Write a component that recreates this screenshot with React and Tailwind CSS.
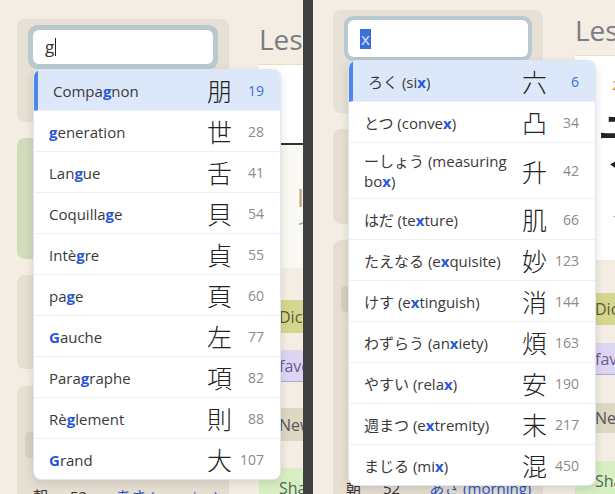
import React from "react";

const FONT = { fontFamily: '"Open Sans", "Noto Sans CJK JP", sans-serif' };
const CJK = { fontFamily: '"Noto Sans CJK JP", sans-serif' };

const leftItems = [
  ["Compagnon", "朋", 19],
  ["generation", "世", 28],
  ["Langue", "舌", 41],
  ["Coquillage", "貝", 54],
  ["Intègre", "貞", 55],
  ["page", "頁", 60],
  ["Gauche", "左", 77],
  ["Paragraphe", "項", 82],
  ["Règlement", "則", 88],
  ["Grand", "大", 107],
];

const rightItems = [
  ["ろく (six)", "六", 6],
  ["とつ (convex)", "凸", 34],
  ["ーしょう (measuring box)", "升", 42],
  ["はだ (texture)", "肌", 66],
  ["たえなる (exquisite)", "妙", 123],
  ["けす (extinguish)", "消", 144],
  ["わずらう (anxiety)", "煩", 163],
  ["やすい (relax)", "安", 190],
  ["週まつ (extremity)", "末", 217],
  ["まじる (mix)", "混", 450],
];

function Word({ text, q }) {
  const i = text.toLowerCase().indexOf(q);
  if (i < 0) return <>{text}</>;
  return (
    <>
      {text.slice(0, i)}
      <span className="font-bold text-[#2858d8]">{text.slice(i, i + 1)}</span>
      {text.slice(i + 1)}
    </>
  );
}

function Dropdown({ items, q, className }) {
  return (
    <div
      className={
        "absolute w-[248px] bg-white rounded-lg overflow-hidden border border-[#e2e6ee] shadow-[0_3px_10px_rgba(0,0,0,0.12)] " +
        className
      }
    >
      {items.map(([w, k, n], idx) => {
        const active = idx === 0;
        return (
          <div
            key={idx}
            className={
              "flex items-center pt-[8px] pb-[7px] pr-[16px] border-b border-[#eef0f3] last:border-b-0 " +
              (active
                ? "bg-[#dce8fa] border-l-4 border-l-[#4a88ee] pl-[15px]"
                : "pl-[15px]")
            }
          >
            <div className="flex-1 text-[15px] leading-[20px] text-[#3a3a3a] pr-2">
              <Word text={w} q={q} />
            </div>
            <div className="w-[25px] text-[25px] leading-[25px] font-light text-[#222]" style={CJK}>
              {k}
            </div>
            <div
              className={
                "w-[32px] text-right text-[14px] leading-[20px] " +
                (active ? "text-[#3b6fd8]" : "text-[#8a8a8a]")
              }
            >
              {n}
            </div>
          </div>
        );
      })}
    </div>
  );
}

function Chip({ label, className }) {
  return (
    <div className={"w-full pl-[20px] flex items-center text-[16px] " + className}>
      {label}
    </div>
  );
}

function MorningLine({ className }) {
  return (
    <div className={"flex text-[15px] leading-[20px] text-[#333] " + className}>
      <span style={CJK}>朝</span>
      <span className="ml-[22px]">52</span>
      <span className="ml-[29px] text-[#2856c4]">あさ (morning)</span>
    </div>
  );
}

function LeftPanel() {
  return (
    <div className="relative w-[303px] h-[494px] overflow-hidden bg-[#f4ede3] shrink-0" style={FONT}>
      <div className="flex pl-[17px] pt-[19px] gap-[30px]">
        <div className="w-[212px] shrink-0 flex flex-col">
          <div className="h-[103px] rounded-lg bg-[#e7e0d4] pt-[6px] px-[11px]">
            <div className="rounded-[9px] bg-[#b9c9d0] p-[5px] h-[44px]">
              <div className="h-[34px] bg-white rounded-[6px] flex items-center pl-[12px] text-[17px] text-[#333]">
                g<span className="inline-block w-px h-[18px] bg-[#222] ml-[1px]" />
              </div>
            </div>
          </div>
          <div className="mt-[16px] h-[121px] rounded-lg bg-[#d0dcbc]" />
          <div className="mt-[16px] h-[94px] rounded-lg bg-[#e6ded1]" />
          <div className="mt-[17px] h-[120px] rounded-lg bg-[#e6ded1] px-[8px] pt-[46px]">
            <div className="w-[70px] h-[26px] rounded bg-[#d8d0c3]" />
            <MorningLine className="mt-[28px] pl-[8px]" />
          </div>
        </div>
        <div className="flex-1 min-w-[200px] flex flex-col">
          <div className="h-[40px] text-[28px] leading-[40px] text-[#7b7c85]">Lesson</div>
          <div className="mt-[5px] h-[81px] bg-white border-t border-[#e6e0c8] border-b-2 border-b-[#333]" />
          <div className="h-[123px] bg-[#faf8f3] pl-[38px] pt-[38px] flex flex-col">
            <span className="text-[26px] leading-[28px] text-[#c8a27a]">I</span>
            <span className="text-[20px] leading-[24px] text-[#9aa6bd]" style={CJK}>イ</span>
          </div>
          <div className="mt-[32px] h-[33px] bg-[#d6d78f] text-[#5c5a3a]">
            <Chip label="Dict" className="h-full" />
          </div>
          <div className="mt-[17px] h-[32px] bg-[#ddd6f2] border-b border-[#b6a6dc] text-[#6b5a9a]">
            <Chip label="fave" className="h-full" />
          </div>
          <div className="mt-[26px] h-[33px] bg-[#ddd8c2] text-[#555]">
            <Chip label="New" className="h-full" />
          </div>
          <div className="mt-[27px] h-[40px] bg-[#d7efc2] text-[#4d6a59]">
            <Chip label="Sha" className="h-full" />
          </div>
        </div>
      </div>
      <Dropdown items={leftItems} q="g" className="left-[33px] top-[69px]" />
    </div>
  );
}

function RightPanel() {
  return (
    <div className="relative w-[302px] h-[494px] overflow-hidden bg-[#f4ede3] shrink-0" style={FONT}>
      <div className="flex pl-[20px] pt-[10px] gap-[32px]">
        <div className="w-[210px] shrink-0 flex flex-col">
          <div className="h-[103px] rounded-lg bg-[#e7e0d4] pt-[6px] px-[11px]">
            <div className="rounded-[9px] bg-[#b9c9d0] p-[4px] h-[45px]">
              <div className="h-[37px] bg-white rounded-[6px] flex items-center pl-[12px] text-[17px]">
                <span className="bg-[#3d6fd8] text-[#d8e6ff] px-[1px] leading-[20px]">x</span>
              </div>
            </div>
          </div>
          <div className="mt-[16px] h-[95px] rounded-lg bg-[#e6ded1]" />
          <div className="mt-[16px] h-[260px] rounded-lg bg-[#e6ded1] px-[8px] pt-[46px]">
            <div className="w-[70px] h-[26px] rounded bg-[#d8d0c3]" />
            <MorningLine className="mt-[166px] pl-[5px]" />
          </div>
        </div>
        <div className="flex-1 min-w-[200px] flex flex-col">
          <div className="h-[40px] text-[28px] leading-[40px] text-[#7b7c85]">Lesson</div>
          <div className="mt-[5px] h-[205px] bg-white border-t border-[#e6e0c8] pl-[22px] pt-[20px]">
            <div className="text-[13px] text-[#c88a3a] pl-[15px]">2</div>
            <div className="text-[64px] leading-[64px] text-[#222] -ml-[2px] mt-[8px]" style={CJK}>テ</div>
            <div className="text-[16px] text-[#9aa0ad] pl-[15px] mt-[40px]" style={CJK}>マ</div>
          </div>
          <div className="mt-[33px] h-[32px] bg-[#d6d78f] text-[#5c5a3a]">
            <Chip label="Dict" className="h-full" />
          </div>
          <div className="mt-[18px] h-[32px] bg-[#ddd6f2] border-b border-[#b6a6dc] text-[#6b5a9a]">
            <Chip label="fave" className="h-full" />
          </div>
          <div className="mt-[28px] h-[30px] bg-[#ddd8c2] text-[#555]">
            <Chip label="New" className="h-full" />
          </div>
          <div className="mt-[28px] h-[40px] bg-[#d7efc2] text-[#4d6a59]">
            <Chip label="Sha" className="h-full" />
          </div>
        </div>
      </div>
      <Dropdown items={rightItems} q="x" className="left-[35px] top-[60px]" />
    </div>
  );
}

export default function App() {
  return (
    <div className="flex w-[615px] h-[494px] overflow-hidden bg-[#3f3f3f]">
      <LeftPanel />
      <div className="w-[10px] shrink-0 bg-[#404040]" />
      <RightPanel />
    </div>
  );
}
